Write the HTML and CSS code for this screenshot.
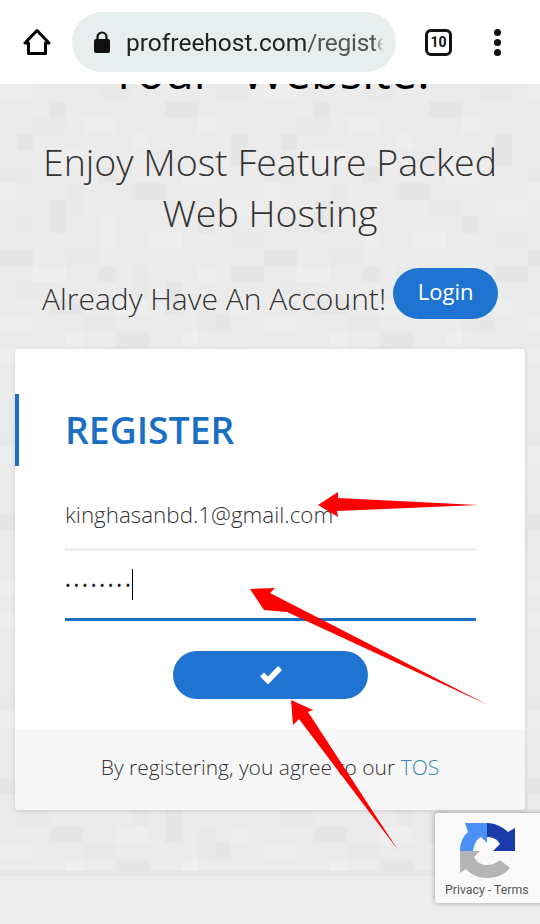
FILE: index.html

```html
<!DOCTYPE html>
<html lang="en">
<head>
    <meta charset="UTF-8">
    <meta name="viewport" content="width=device-width, initial-scale=1.0">
    <title>Register</title>
    <link rel="stylesheet" href="styles.css">
</head>
<body>
    <div class="phone">
        <!-- browser toolbar -->
        <header class="toolbar">
            <svg class="home-icon" viewBox="0 0 28 28" width="28" height="28">
                <path d="M14 2.500 2 15h3.500v10.500h17V15H26Z" fill="none" stroke="#000" stroke-width="3" stroke-linejoin="round"/>
            </svg>
            <div class="url-pill">
                <svg class="lock-icon" viewBox="0 0 18 22" width="18" height="22">
                    <path d="M4.500 9V6a4.500 4.500 0 0 1 9 0v3" fill="none" stroke="#111" stroke-width="2.200"/>
                    <rect x="1" y="8" width="16" height="14" rx="2" fill="#111"/>
                </svg>
                <div class="url-text">profreehost.com<span class="url-path">/registe</span></div>
            </div>
            <div class="tab-count">10</div>
            <div class="menu-dots"><span></span><span></span><span></span></div>
        </header>

        <main class="content">
            <h1 class="headline">Your Website!</h1>
            <h2 class="subhead">Enjoy Most Feature Packed<br>Web Hosting</h2>
            <div class="login-row">
                <span class="login-text">Already Have An Account!</span>
                <a class="login-btn">Login</a>
            </div>

            <section class="card">
                <div class="card-body">
                    <h3 class="card-title">REGISTER</h3>
                    <div class="field">kinghasanbd.1@gmail.com</div>
                    <div class="field field-active">
                        <span class="pw-dots">••••••••</span><span class="caret"></span>
                    </div>
                    <button class="submit-btn">
                        <svg viewBox="0 0 24 20" width="24" height="20">
                            <path d="M3 10.500 9 16.500 21 4" fill="none" stroke="#fff" stroke-width="5.500"/>
                        </svg>
                    </button>
                </div>
                <div class="card-foot">By registering, you agree to our <a class="tos">TOS</a></div>
            </section>
        </main>
        <div class="page-end"></div>

        <!-- recaptcha badge -->
        <div class="recaptcha">
            <svg class="recaptcha-logo" viewBox="0 0 56 56" width="56" height="56">
                <path d="M0 28C0 20 3 13 8 9L5 0H27V20L21 14C16 16 14 22 13 28Z" fill="#4a90f5"/>
                <path d="M27 0C35 0 43 4 48 9L55 5V28H33L40 21C37 16 33 14 27 14Z" fill="#1a3bab"/>
                <path d="M0 28H20L14 34C17 40 22 42 27 42C33 42 37 39 40 37L50 45C44 52 36 55 27 55C19 55 11 52 6 46L0 50Z" fill="#b5b5b5"/>
            </svg>
            <div class="recaptcha-links">Privacy - Terms</div>
        </div>

        <!-- red arrows drawn over the screenshot -->
        <svg class="arrows" viewBox="0 0 540 924" width="540" height="924">
            <polygon points="318,505 338,492 338,498 478,505 337,511 338,517" fill="#f00"/>
            <polygon points="250,589 275,588 270,593 488,705 287,612 264,610" fill="#f00"/>
            <polygon points="291,700 313,710 308,712 398,850 299,719 293,725" fill="#f00"/>
        </svg>
    </div>
</body>
</html>
```

FILE: styles.css

```css
* {
    box-sizing: border-box;
}
body {
    margin: 0;
    font-family: 'Open Sans', sans-serif;
    color: #333;
}
.phone {
    position: relative;
    width: 540px;
    height: 924px;
    overflow: hidden;
    display: flex;
    flex-direction: column;
    background-color: #ededed;
}

/* toolbar */
.toolbar {
    flex: none;
    height: 84px;
    background-color: #fff;
    display: flex;
    align-items: center;
    padding: 0 0 0 23px;
    position: relative;
    z-index: 2;
}
.home-icon {
    flex: none;
    margin-top: -1px;
}
.url-pill {
    flex: none;
    width: 324px;
    height: 60px;
    margin-left: 21px;
    border-radius: 30px;
    background-color: #e8eeee;
    display: flex;
    align-items: center;
    padding-left: 21px;
}
.lock-icon {
    flex: none;
}
.url-text {
    width: 258px;
    margin-left: 15px;
    font-family: 'Roboto', sans-serif;
    font-size: 24.500px;
    color: #222;
    white-space: nowrap;
    overflow: hidden;
    -webkit-mask-image: linear-gradient(to right, #000 96%, transparent 100%);
    mask-image: linear-gradient(to right, #000 96%, transparent 100%);
}
.url-path {
    color: #555;
    letter-spacing: -0.3px;
}
.tab-count {
    flex: none;
    width: 27px;
    height: 27px;
    margin-left: 29px;
    border: 3px solid #111;
    border-radius: 6px;
    font-family: 'Roboto', sans-serif;
    font-size: 14px;
    font-weight: 700;
    color: #111;
    display: flex;
    align-items: center;
    justify-content: center;
}
.menu-dots {
    flex: none;
    margin-left: 42px;
    display: flex;
    flex-direction: column;
    gap: 3px;
}
.menu-dots span {
    width: 7px;
    height: 7px;
    border-radius: 50%;
    background-color: #111;
}

/* page */
.content {
    flex: none;
    height: 787px;
    overflow: hidden;
    text-align: center;
    padding: 0 15px;
    background-color: #ebebeb;
    background-image: url("data:image/svg+xml,%3Csvg xmlns='http://www.w3.org/2000/svg' width='264' height='264' viewBox='0 0 16 16' shape-rendering='crispEdges'%3E%3Cpath fill='%23e6e6e6' d='M3 1h1v1H3zM10 1h2v1h-2zM1 3h1v1H1zM14 3h1v2h-1zM6 5h1v1H6zM8 6h2v1H8zM3 7h1v2H3zM12 8h1v1h-1zM0 10h2v1H0zM6 11h1v1H6zM14 11h2v1h-2zM10 12h1v2h-1zM3 13h2v1H3zM7 15h2v1H7zM13 14h1v1h-1z'/%3E%3Cpath fill='%23eeeeee' d='M0 0h2v1H0zM5 2h2v1H5zM12 2h1v1h-1zM8 3h1v1H8zM3 4h2v1H3zM11 5h2v1h-2zM0 6h1v1H0zM6 8h1v2H6zM14 7h2v1h-2zM9 9h2v1H9zM2 11h2v1H2zM12 11h1v1h-1zM7 13h2v1H7zM14 13h1v1h-1zM0 14h2v1H0zM4 15h1v1H4zM11 15h1v1h-1z'/%3E%3Cpath fill='%23e9e9e9' d='M6 0h2v1H6zM13 0h2v1h-2zM2 2h2v1H2zM9 4h2v1H9zM0 5h2v1H0zM4 6h1v2H4zM10 7h2v1h-2zM1 8h1v1H1zM14 9h2v1h-2zM8 11h1v2H8zM4 10h2v1H4zM12 13h1v2h-1zM1 12h2v1H1zM5 14h2v1H5z'/%3E%3C/svg%3E");
}
.headline {
    margin: -43px 0 0;
    font-size: 47px;
    line-height: 60px;
    font-weight: 400;
    word-spacing: 16px;
    color: #000;
}
.subhead {
    margin: 35px 0 0;
    font-size: 37.500px;
    line-height: 51px;
    font-weight: 300;
    color: #333;
}
.login-row {
    margin-top: 30px;
    display: flex;
    align-items: center;
    padding-left: 27px;
    gap: 7px;
}
.login-text {
    margin-top: 10px;
    font-size: 30px;
    font-weight: 300;
    white-space: nowrap;
}
.login-btn {
    width: 105px;
    height: 51px;
    border-radius: 26px;
    background-color: #1f74d2;
    color: #fff;
    font-size: 22px;
    display: flex;
    align-items: center;
    justify-content: center;
    padding-bottom: 5px;
}

/* card */
.card {
    margin-top: 30px;
    height: 461px;
    background-color: #fff;
    border-radius: 4px;
    box-shadow: 0 1px 5px rgba(0,0,0,0.12);
    overflow: hidden;
    text-align: left;
    display: flex;
    flex-direction: column;
}
.card-body {
    flex: 1;
    padding: 45px 49px 0 50px;
}
.card-title {
    margin: 0 0 0 -50px;
    padding-left: 46px;
    height: 72px;
    border-left: 4px solid #1b6fc2;
    font-size: 37.300px;
    line-height: 72px;
    font-weight: 600;
    color: #1b6fc2;
}
.field {
    height: 73px;
    padding-top: 22px;
    border-bottom: 3px solid #eee;
    margin-top: 12px;
    font-size: 22.400px;
    line-height: 30px;
    font-weight: 300;
    color: #333;
    white-space: nowrap;
}
.field-active {
    height: 70px;
    margin-top: 0;
    border-bottom-color: #1b6fc2;
    display: flex;
    align-items: center;
    padding: 3px 0 4px;
}
.pw-dots {
    margin: 2px 0 0 1px;
    font-size: 10px;
    line-height: 30px;
    letter-spacing: 4.800px;
    font-weight: 700;
    color: #222;
}
.caret {
    width: 1px;
    height: 31px;
    margin-left: -2px;
    background-color: #000;
}
.submit-btn {
    display: flex;
    align-items: center;
    justify-content: center;
    width: 195px;
    height: 48px;
    margin: 30px auto 0;
    padding: 0 0 3px;
    border: none;
    border-radius: 24px;
    background-color: #1f74d2;
}
.card-foot {
    flex: none;
    height: 81px;
    background-color: #f7f7f7;
    font-size: 21px;
    font-weight: 300;
    line-height: 76px;
    text-align: center;
    color: #333;
}
.tos {
    color: #3a86ae;
}
.page-end {
    flex: none;
    height: 53px;
    border-top: 5px solid #e6e6e6;
}

/* overlays */
.recaptcha {
    position: absolute;
    left: 435px;
    top: 813px;
    width: 110px;
    height: 90px;
    background-color: #f9f9f9;
    border-radius: 3px;
    box-shadow: 0 0 5px rgba(0,0,0,0.35);
    padding: 10px 0 0 25px;
}
.recaptcha-logo {
    display: block;
}
.recaptcha-links {
    margin: 4px 0 0 -15px;
    font-family: 'Roboto', sans-serif;
    font-size: 12.300px;
    line-height: 14px;
    color: #555;
    white-space: nowrap;
}
.arrows {
    position: absolute;
    left: 0;
    top: 0;
    z-index: 3;
}
```
